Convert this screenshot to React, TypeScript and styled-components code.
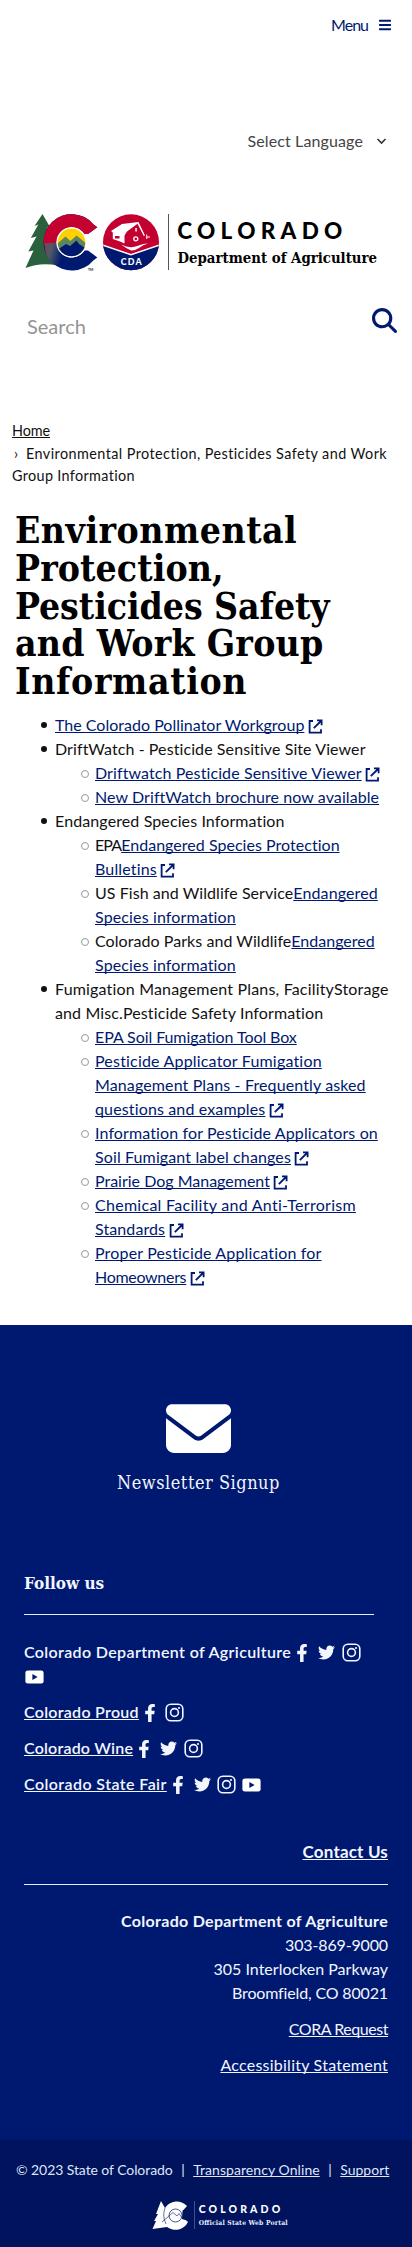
import React from "react";
import styled, { createGlobalStyle } from "styled-components";
import { FaBars, FaFacebookF, FaTwitter } from "react-icons/fa";
import { FaEnvelope, FaMagnifyingGlass } from "react-icons/fa6";

const NAVY = "#001970";
const sans = `Lato, "Open Sans", sans-serif`;
const slab = `"DejaVu Serif Condensed", "DejaVu Serif", serif`;

const GlobalStyle = createGlobalStyle`
  body { margin: 0; background: #fff; color: #111; font: 16px/24px ${sans}; }
  * { box-sizing: border-box; }
`;

const Page = styled.div`
  width: 412px;
  height: 2247px;
  display: flex;
  flex-direction: column;
  overflow: hidden;
  white-space: nowrap;
`;

const Run = styled.span<{ $track?: number }>`
  letter-spacing: ${(p) => p.$track ?? 0}px;
`;

const Anchor = styled.a<{ $track?: number }>`
  color: inherit;
  letter-spacing: ${(p) => p.$track ?? 0}px;
  text-decoration: underline;
  text-decoration-skip-ink: none;
  text-decoration-thickness: 1px;
  text-underline-offset: 1px;
`;

const Header = styled.header`
  height: 420px;
  display: flex;
  flex-direction: column;
`;

const MenuBar = styled.div`
  display: flex;
  justify-content: flex-end;
  align-items: center;
  gap: 11px;
  height: 24px;
  margin: 13px 21px 0 0;
  color: ${NAVY};
  svg { width: 12px; height: 14px; }
`;

const LanguageBar = styled.div`
  display: flex;
  justify-content: flex-end;
  align-items: center;
  gap: 13px;
  height: 24px;
  margin: 92px 25px 0 0;
  color: #444;
`;

const BrandLogo = styled.svg`
  display: block;
  width: 356px;
  height: 60px;
  margin: 59px 0 0 24px;
`;

const SearchBar = styled.div`
  display: flex;
  justify-content: space-between;
  align-items: flex-start;
  height: 40px;
  margin: 36px 15px 0 27px;
  color: #949494;
  font-size: 20px;
  line-height: 36px;
  svg { width: 25px; height: 25px; color: ${NAVY}; }
`;

const Breadcrumb = styled.nav`
  height: 68px;
  padding-left: 12px;
  font-size: 14.4px;
  line-height: 22.7px;
`;

const Crumb = styled.span`
  display: inline-block;
  padding-left: 2px;
  width: 14px;
`;

const Title = styled.h1`
  margin: 24px 0 9px 15px;
  font: bold 37px/37.8px ${slab};
  height: 192px;
  color: #000;
`;

const TitleLine = styled.span<{ $track: number }>`
  display: block;
  letter-spacing: ${(p) => p.$track}px;
`;

const List = styled.ul`
  list-style: none;
  margin: 0;
  padding: 0 0 0 55px;
`;

const SubList = styled(List)`
  padding-left: 40px;
`;

const Item = styled.li<{ $hollow?: boolean }>`
  position: relative;
  &::before {
    content: "";
    position: absolute;
    left: -14px;
    top: 9px;
    width: 6px;
    height: 6px;
    border-radius: 50%;
    background: ${(p) => (p.$hollow ? "transparent" : "#111")};
    border: ${(p) => (p.$hollow ? "1px solid #999" : "0")};
  }
`;

const Line = styled.div`
  height: 24px;
`;

const ListLink = styled(Anchor)`
  color: ${NAVY};
`;

const ExternalSvg = styled.svg`
  width: 15px;
  height: 15px;
  margin-left: 3.5px;
  vertical-align: -3px;
  color: ${NAVY};
`;

const Footer = styled.footer`
  margin-top: 36px;
  height: 815px;
  display: flex;
  flex-direction: column;
  background: ${NAVY};
  color: #f2f6ff;
`;

const Newsletter = styled.div`
  width: 397px;
  padding-top: 71px;
  height: 245px;
  display: flex;
  flex-direction: column;
  align-items: center;
  gap: 8px;
  font: 18px/28px ${slab};
  svg { width: 65px; height: 65px; color: #fff; }
`;

const FollowTitle = styled.h2`
  margin: 0 0 18px 24px;
  font: bold 17px/26px ${slab};
`;

const Rule = styled.div<{ $width: number }>`
  width: ${(p) => p.$width}px;
  height: 1px;
  margin-left: 24px;
  background: #e8eeff;
`;

const Social = styled.div`
  padding: 25px 0 0 24px;
  font-weight: 600;
  height: 199px;
`;

const SocialRow = styled.div`
  display: flex;
  flex-wrap: wrap;
  align-items: center;
  column-gap: 4.7px;
  width: 350px;
  margin-bottom: 12px;
`;

const SocialName = styled.span`
  margin-right: -4px;
`;

const IconCell = styled.span`
  width: 20px;
  height: 24px;
  display: flex;
  align-items: center;
  justify-content: center;
  svg { display: block; margin-top: 1px; }
`;

const Contact = styled.div`
  display: flex;
  flex-direction: column;
  align-items: flex-end;
  padding-right: 24px;
`;

const ContactTitle = styled.div`
  font-size: 17px;
  font-weight: 700;
  margin: 26px 0 20px;
`;

const Address = styled.div`
  padding-top: 24px;
  text-align: right;
`;

const Paragraph = styled.div`
  margin-top: 12px;
`;

const Bottom = styled.div`
  height: 107px;
  flex: none;
  display: flex;
  flex-direction: column;
  align-items: center;
  padding-top: 18px;
  background: #00135c;
  color: #dfe6fb;
  font-size: 14px;
`;

const LegalRow = styled.div`
  display: flex;
  align-self: flex-start;
  padding-left: 16px;
  gap: 8.5px;
`;

const PortalLogo = styled.svg`
  width: 136px;
  height: 30px;
  margin: 18px 0 0 28px;
`;

type Part = { text: string; track: number; href?: boolean };
type Entry = { lines: Part[][]; external?: boolean; children?: Entry[] };

const link = (text: string, track: number): Part => ({ text, track, href: true });
const plain = (text: string, track: number): Part => ({ text, track });

const entries: Entry[] = [
  { lines: [[link("The Colorado Pollinator Workgroup", 0.01)]], external: true },
  {
    lines: [[plain("DriftWatch - Pesticide Sensitive Site Viewer", 0.09)]],
    children: [
      { lines: [[link("Driftwatch Pesticide Sensitive Viewer", 0.1)]], external: true },
      { lines: [[link("New DriftWatch brochure now available", 0.08)]] },
    ],
  },
  {
    lines: [[plain("Endangered Species Information", 0.11)]],
    children: [
      { lines: [[plain("EPA", -0.9), link("Endangered Species Protection", 0.03)], [link("Bulletins", 0.15)]], external: true },
      { lines: [[plain("US Fish and Wildlife Service", 0.06), link("Endangered", 0.12)], [link("Species information", 0.13)]] },
      { lines: [[plain("Colorado Parks and Wildlife", 0.06), link("Endangered", 0)], [link("Species information", 0.13)]] },
    ],
  },
  {
    lines: [
      [plain("Fumigation Management Plans, FacilityStorage", 0.18)],
      [plain("and Misc.Pesticide Safety Information", 0.12)],
    ],
    children: [
      { lines: [[link("EPA Soil Fumigation Tool Box", -0.08)]] },
      {
        lines: [
          [link("Pesticide Applicator Fumigation", 0.19)],
          [link("Management Plans - Frequently asked", 0.12)],
          [link("questions and examples", 0.14)],
        ],
        external: true,
      },
      { lines: [[link("Information for Pesticide Applicators on", 0.12)], [link("Soil Fumigant label changes", 0.12)]], external: true },
      { lines: [[link("Prairie Dog Management", 0)]], external: true },
      { lines: [[link("Chemical Facility and Anti-Terrorism", 0.28)], [link("Standards", 0.1)]], external: true },
      { lines: [[link("Proper Pesticide Application for", 0.16)], [link("Homeowners", -0.3)]], external: true },
    ],
  },
];

const ExternalIcon = () => (
  <ExternalSvg viewBox="0 0 15 15" fill="none" stroke="currentColor" strokeWidth="1.8">
    <path d="M5 2H1.600v11.600h11.400V10.300" />
    <path d="M5.800 9.200 13 2M9 1.400h4.600v4.800" />
  </ExternalSvg>
);

const renderEntries = (list: Entry[], hollow: boolean) =>
  list.map((entry, i) => (
    <Item key={i} $hollow={hollow}>
      {entry.lines.map((parts, j) => (
        <Line key={j}>
          {parts.map((p) =>
            p.href ? (
              <ListLink key={p.text} $track={p.track}>{p.text}</ListLink>
            ) : (
              <Run key={p.text} $track={p.track}>{p.text}</Run>
            )
          )}
          {entry.external && j === entry.lines.length - 1 && <ExternalIcon />}
        </Line>
      ))}
      {entry.children && <SubList>{renderEntries(entry.children, true)}</SubList>}
    </Item>
  ));

const InstagramIcon = () => (
  <svg width="19" height="19" viewBox="0 0 19 19" fill="none" stroke="currentColor">
    <rect x="1.2" y="1.2" width="16.6" height="16.6" rx="4.6" strokeWidth="1.6" />
    <circle cx="9.5" cy="9.5" r="3.9" strokeWidth="1.6" />
    <circle cx="14" cy="5" r="1.1" fill="currentColor" stroke="none" />
  </svg>
);

const YoutubeIcon = () => (
  <svg width="19" height="14" viewBox="0 0 19 14">
    <rect x="0.4" y="0.4" width="18.2" height="13.2" rx="2.4" fill="#fff" />
    <path d="M7.4 4v6l5.2-3z" fill={NAVY} />
  </svg>
);

const icons: Record<string, React.ReactNode> = {
  f: <FaFacebookF size={18} />,
  t: <FaTwitter size={17} />,
  i: <InstagramIcon />,
  y: <YoutubeIcon />,
};

const accounts = [
  { name: "Colorado Department of Agriculture", track: 0.36, marks: "ftiy" },
  { name: "Colorado Proud", track: 0.28, marks: "fi", href: true },
  { name: "Colorado Wine", track: 0.2, marks: "fti", href: true },
  { name: "Colorado State Fair", track: 0.42, marks: "ftiy", href: true },
];

const LETTER_C =
  "M97.300 227.200 93.300 224.200A28.200 28.200 0 1 0 93.300 260.400L97.300 257.400 88 250.500H84.500A15.200 15.200 0 1 1 84.500 234.100H88Z";

const StateMark = () => (
  <>
    <defs>
      <clipPath id="upper"><rect x="40" y="212" width="60" height="31" /></clipPath>
      <clipPath id="disc"><circle cx="71.5" cy="242.4" r="13.8" /></clipPath>
      <clipPath id="seal"><circle cx="131" cy="242.3" r="28" /></clipPath>
      <linearGradient id="fade" x1="0" y1="0" x2="1" y2="0.3">
        <stop offset="0" stopColor="#8a3a50" />
        <stop offset="0.4" stopColor="#4f5a66" />
        <stop offset="1" stopColor={NAVY} />
      </linearGradient>
    </defs>
    <path d="M42.5 214 50.5 228 47 227.5 55 243 51 242.5 60 259 58 265.5Q40 262 25.5 268L33.5 250.5 28.3 251.5 36.5 236.5 30.8 238 38.3 224.5 34.5 226Z" fill="#2b603d" />
    <path d={LETTER_C} fill={NAVY} />
    <path d="M45.5 252 44 243H56L58 250Q60 256 64 259L57 265.5Q48 262 45.5 252Z" fill="url(#fade)" />
    <path clipPath="url(#upper)" d={LETTER_C} fill="#c3002f" />
    <circle cx="71.5" cy="242.4" r="15.1" fill="#fff" />
    <g clipPath="url(#disc)">
      <rect x="56" y="227" width="31" height="31" fill="#ffd100" />
      <path d="M57 244 65.5 236.500 70.500 241 76.500 235.500 87 244V250H57Z" fill="#5d8560" />
      <path d="M57 250 66 244 70 246 76.500 240.500 79 244 87 249V259H57Z" fill={NAVY} />
    </g>
  </>
);

const App = () => (
  <Page>
    <GlobalStyle />
    <Header>
      <MenuBar>
        <Run $track={-1}>Menu</Run>
        <FaBars />
      </MenuBar>
      <LanguageBar>
        <Run $track={0.12}>Select Language</Run>
        <svg width="11" height="7" viewBox="0 0 11 7" fill="none" stroke="#333" strokeWidth="1.6">
          <path d="M1.500 1 5.500 5 9.500 1" />
        </svg>
      </LanguageBar>
      <BrandLogo viewBox="24 212 356 60">
        <StateMark />
        <text x="88" y="270.500" fontSize="3.500" fontFamily="Lato" fontWeight="700" fill="#222">TM</text>
        <g clipPath="url(#seal)">
          <rect x="103" y="214" width="56" height="57" fill="#c3002f" />
          <path d="M103 245 131 255 159 245V271H103Z" fill={NAVY} />
          <path d="M103 245.200 131 254.700 159 245.200" fill="none" stroke="#fff" strokeWidth="1.500" />
          <path d="M111 231 122 224 138.500 222 145 235.500 143.800 236 137.500 223.800 127 231.500 124.500 235.500V243.500L120 241.500 112.800 239V232.500Z" fill="#fff" />
          <path d="M115 236h4.500v2.600H115Z" fill="#c3002f" />
          <path d="M135.300 228h1.500v3.500h-1.500ZM146.200 234.500h1v4.500h-1ZM147 236.500h3v1h-3Z" fill="#fff" />
          <circle cx="135.800" cy="238.800" r="2" fill="none" stroke="#fff" strokeWidth="1.300" />
          <path d="M121 244.500Q131 249.500 140 245 144 243.300 148 243.500 143 244.800 139 248 134 251 131 250.500 125 247.500 121 244.500Z" fill="#fff" />
        </g>
        <text x="120.700" y="264.800" fontSize="8.800" fontFamily="Lato" fontWeight="900" fill="#fff" textLength="21">CDA</text>
        <rect x="168" y="214" width="1" height="56" fill="#555" />
        <text x="177.300" y="239" fontSize="22.500" fontFamily="Lato" fontWeight="900" fill="#000" textLength="165">COLORADO</text>
        <text x="177.500" y="262.800" fontSize="14.800" fontFamily="DejaVu Serif Condensed" fontWeight="700" fill="#000" textLength="199.500">Department of Agriculture</text>
      </BrandLogo>
      <SearchBar>
        <span>Search</span>
        <FaMagnifyingGlass />
      </SearchBar>
    </Header>

    <Breadcrumb>
      <Anchor $track={-0.1}>Home</Anchor>
      <br />
      <Crumb>›</Crumb>
      <Run $track={0.43}>Environmental Protection, Pesticides Safety and Work</Run>
      <br />
      <Run $track={0.34}>Group Information</Run>
    </Breadcrumb>

    <Title>
      <TitleLine $track={0.5}>Environmental</TitleLine>
      <TitleLine $track={0.1}>Protection,</TitleLine>
      <TitleLine $track={-0.05}>Pesticides Safety</TitleLine>
      <TitleLine $track={0.25}>and Work Group</TitleLine>
      <TitleLine $track={0.65}>Information</TitleLine>
    </Title>

    <List>{renderEntries(entries, false)}</List>

    <Footer>
      <Newsletter>
        <FaEnvelope />
        <Run $track={0.52}>Newsletter Signup</Run>
      </Newsletter>
      <FollowTitle>Follow us</FollowTitle>
      <Rule $width={350} />
      <Social>
        {accounts.map((a) => (
          <SocialRow key={a.name}>
            <SocialName>
              {a.href ? <Anchor $track={a.track}>{a.name}</Anchor> : <Run $track={a.track}>{a.name}</Run>}
            </SocialName>
            {a.marks.split("").map((m) => (
              <IconCell key={m}>{icons[m]}</IconCell>
            ))}
          </SocialRow>
        ))}
      </Social>
      <Contact>
        <ContactTitle><Anchor $track={0.18}>Contact Us</Anchor></ContactTitle>
      </Contact>
      <Rule $width={364} />
      <Contact>
        <Address>
          <Line><b><Run $track={0.3}>Colorado Department of Agriculture</Run></b></Line>
          <Line><Run $track={-0.15}>303-869-9000</Run></Line>
          <Line>305 Interlocken Parkway</Line>
          <Line><Run $track={-0.15}>Broomfield, CO 80021</Run></Line>
        </Address>
        <Paragraph><Anchor $track={-0.45}>CORA Request</Anchor></Paragraph>
        <Paragraph><Anchor $track={0.24}>Accessibility Statement</Anchor></Paragraph>
      </Contact>
    </Footer>
    <Bottom>
      <LegalRow>
        <Run $track={-0.08}>© 2023 State of Colorado</Run>
        <span>|</span>
        <Anchor $track={0.07}>Transparency Online</Anchor>
        <span>|</span>
        <Anchor>Support</Anchor>
      </LegalRow>
      <PortalLogo viewBox="152 2200 136 30">
        <path d="M161 2201 165 2208A14 14 0 0 1 187 2206L183 2210.500 184 2218 188 2222A14 14 0 0 1 167 2227L152.500 2229 156 2221 154 2221 158 2214 156 2214Z" fill="#fff" />
        <circle cx="175.500" cy="2215.500" r="6.500" fill="none" stroke="#00135c" strokeWidth=".7" />
        <path d="M162 2222 173 2212.500 177 2216 179 2213.500 182 2218M165 2208Q162 2216 166 2224" fill="none" stroke="#00135c" strokeWidth=".6" />
        <path d="M182.500 2210.500 190 2208.500V2221.500L182 2219Z" fill="#00135c" />
        <path d="M194.500 2201v28" stroke="#5a6ba5" strokeWidth=".7" />
        <text x="198.700" y="2213" fontSize="10.500" fontFamily="Lato" fontWeight="900" fill="#fff" textLength="81.500">COLORADO</text>
        <text x="198.700" y="2224.500" fontSize="6.800" fontFamily="DejaVu Serif Condensed" fontWeight="700" fill="#e8eeff" textLength="89">Official State Web Portal</text>
      </PortalLogo>
    </Bottom>
  </Page>
);

export default App;
